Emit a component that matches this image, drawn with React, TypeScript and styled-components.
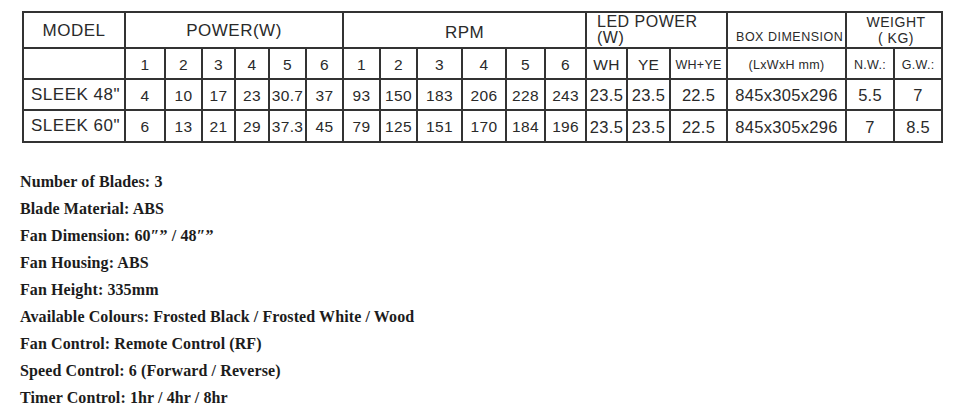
import React from "react";
import styled, { createGlobalStyle } from "styled-components";

const GlobalStyle = createGlobalStyle`
  body {
    margin: 0;
    background: #fff;
  }
`;

const Page = styled.div`
  display: flex;
  flex-direction: column;
  padding: 11px 0 0 22px;
`;

const Table = styled.table`
  border-collapse: collapse;
  table-layout: fixed;
  width: 921px;
  font-family: "Liberation Sans", Arial, sans-serif;
  color: #2a2a2a;
  & td {
    border: 2px solid #333;
    padding: 0;
    text-align: center;
    white-space: nowrap;
    overflow: hidden;
  }
`;

const Row = styled.tr<{ h: number }>`
  height: ${(p) => p.h}px;
`;

const HeadCell = styled.td<{ size?: number; align?: string; valign?: string; pad?: string; lh?: number }>`
  font-size: ${(p) => p.size ?? 17}px;
  letter-spacing: 0.5px;
  line-height: ${(p) => (p.lh ? `${p.lh}px` : 1)};
  text-align: ${(p) => p.align ?? "center"} !important;
  vertical-align: ${(p) => p.valign ?? "middle"};
  padding: ${(p) => p.pad ?? "0"} !important;
`;

const Cell = styled.td<{ size?: number }>`
  font-size: ${(p) => p.size ?? 15.5}px;
  letter-spacing: 0.3px;
  padding-top: 2px !important;
`;

const ModelCell = styled.td`
  font-size: 17px;
  letter-spacing: 0.5px;
  text-align: left !important;
  padding-left: 7px !important;
`;

const Specs = styled.ul`
  list-style: none;
  margin: 25px 0 0 -2px;
  padding: 0;
  font-family: "Liberation Serif", "Times New Roman", serif;
  font-weight: 700;
  font-size: 16px;
  line-height: 27px;
  color: #1c1c1c;
`;

const Spec = styled.li`
  letter-spacing: 0.1px;
`;

const colWidths = [
  102, 40, 37, 33, 34, 37, 37, 37, 37, 45, 44, 39, 41, 41, 43, 57, 119, 48, 48,
];

const speeds = ["1", "2", "3", "4", "5", "6"];

const models = [
  {
    name: 'SLEEK 48"',
    power: ["4", "10", "17", "23", "30.7", "37"],
    rpm: ["93", "150", "183", "206", "228", "243"],
    led: ["23.5", "23.5", "22.5"],
    box: "845x305x296",
    weight: ["5.5", "7"],
  },
  {
    name: 'SLEEK 60"',
    power: ["6", "13", "21", "29", "37.3", "45"],
    rpm: ["79", "125", "151", "170", "184", "196"],
    led: ["23.5", "23.5", "22.5"],
    box: "845x305x296",
    weight: ["7", "8.5"],
  },
];

const specs = [
  "Number of Blades: 3",
  "Blade Material: ABS",
  "Fan Dimension: 60″” / 48″”",
  "Fan Housing: ABS",
  "Fan Height: 335mm",
  "Available Colours: Frosted Black / Frosted White / Wood",
  "Fan Control: Remote Control (RF)",
  "Speed Control: 6 (Forward / Reverse)",
  "Timer Control: 1hr / 4hr / 8hr",
];

const App = () => {
  return (
    <Page>
      <GlobalStyle />
      <Table>
        <colgroup>
          {colWidths.map((w, i) => (
            <col key={i} style={{ width: w }} />
          ))}
        </colgroup>
        <tbody>
          <Row h={36}>
            <HeadCell>MODEL</HeadCell>
            <HeadCell colSpan={6} valign="top" pad="9px 0 0 0">
              POWER(W)
            </HeadCell>
            <HeadCell colSpan={6} pad="4px 0 0 0">
              RPM
            </HeadCell>
            <HeadCell colSpan={3} size={16} lh={16} align="left" pad="0 0 0 10px">
              LED POWER
              <br />
              (W)
            </HeadCell>
            <HeadCell size={12.5} valign="bottom" pad="0 0 4px 8px" align="left">
              BOX DIMENSION
            </HeadCell>
            <HeadCell colSpan={2} size={14} lh={16} pad="0 0 0 4px">
              WEIGHT
              <br />( KG)
            </HeadCell>
          </Row>
          <Row h={31}>
            <Cell />
            {speeds.map((s) => (
              <Cell key={"p" + s}>{s}</Cell>
            ))}
            {speeds.map((s) => (
              <Cell key={"r" + s}>{s}</Cell>
            ))}
            <Cell>WH</Cell>
            <Cell>YE</Cell>
            <Cell size={12.5}>WH+YE</Cell>
            <Cell size={12.5}>(LxWxH mm)</Cell>
            <Cell size={12.5}>N.W.:</Cell>
            <Cell size={12.5}>G.W.:</Cell>
          </Row>
          {models.map((m, i) => (
            <Row h={i === 0 ? 31 : 32} key={m.name}>
              <ModelCell>{m.name}</ModelCell>
              {m.power.map((v, j) => (
                <Cell key={"p" + j}>{v}</Cell>
              ))}
              {m.rpm.map((v, j) => (
                <Cell key={"r" + j}>{v}</Cell>
              ))}
              {m.led.map((v, j) => (
                <Cell key={"l" + j} size={16.5}>
                  {v}
                </Cell>
              ))}
              <Cell size={16.5}>{m.box}</Cell>
              {m.weight.map((v, j) => (
                <Cell key={"w" + j} size={16.5}>
                  {v}
                </Cell>
              ))}
            </Row>
          ))}
        </tbody>
      </Table>
      <Specs>
        {specs.map((s) => (
          <Spec key={s}>{s}</Spec>
        ))}
      </Specs>
    </Page>
  );
};

export default App;
